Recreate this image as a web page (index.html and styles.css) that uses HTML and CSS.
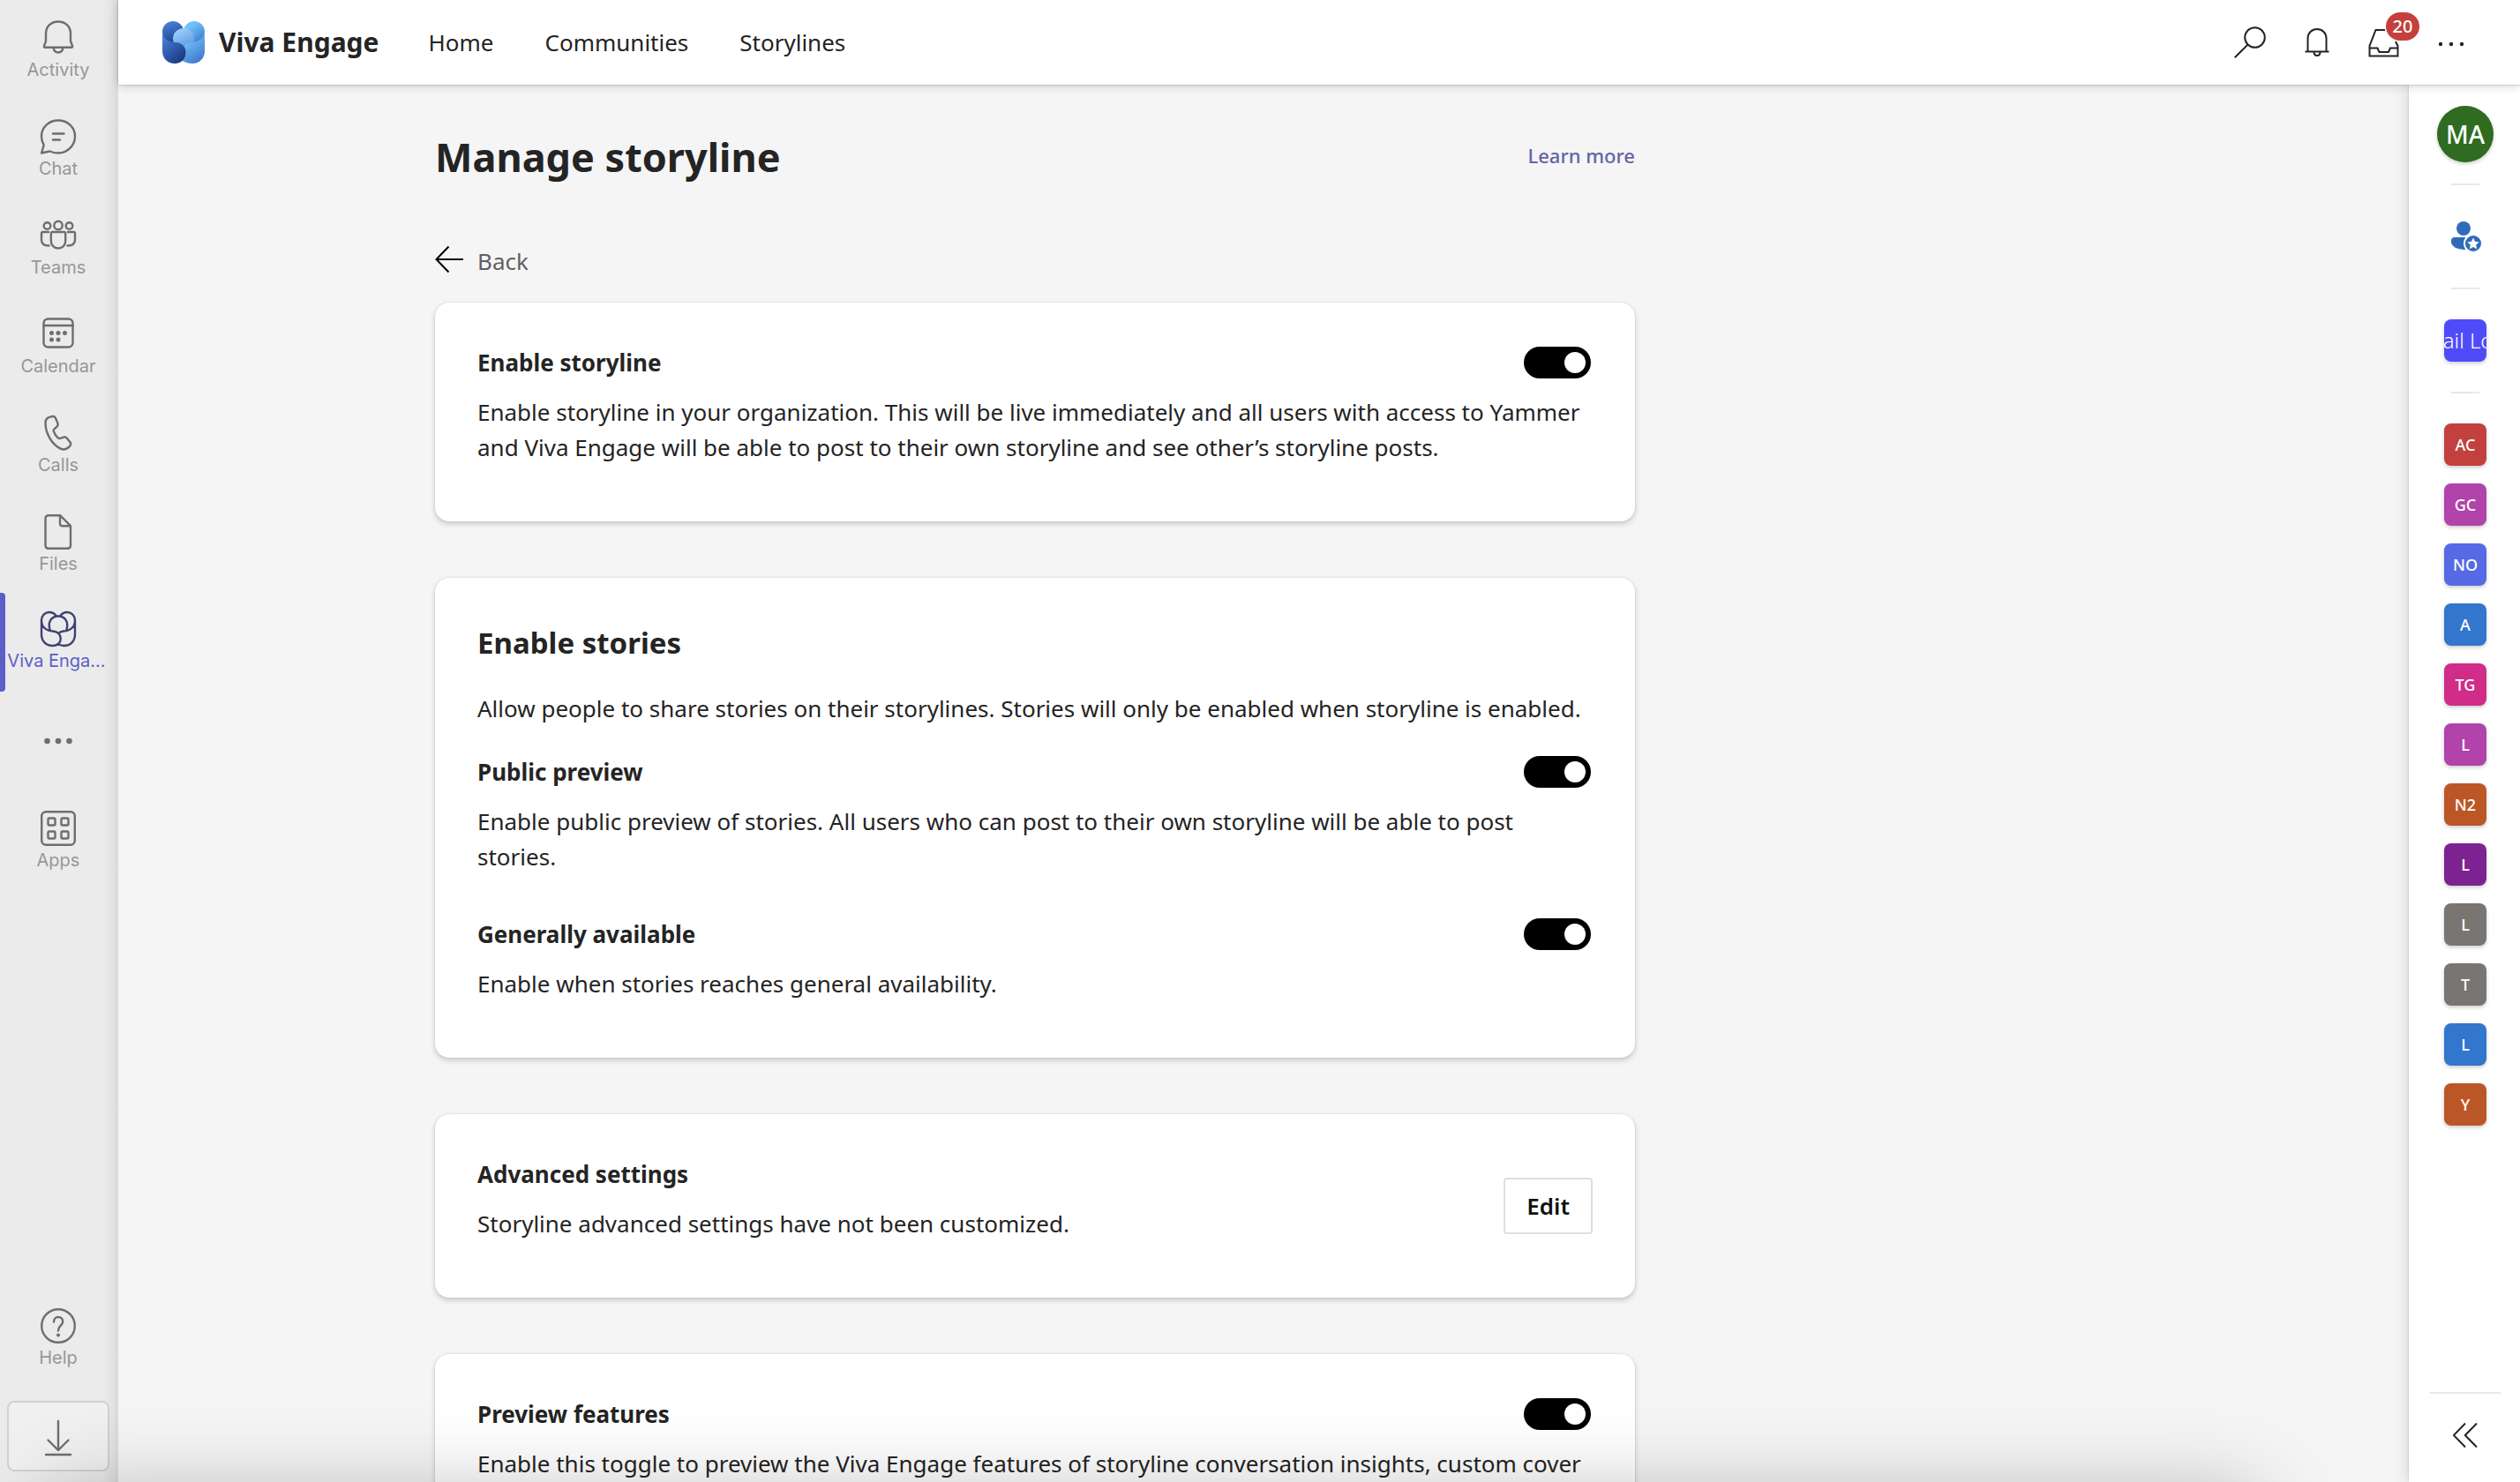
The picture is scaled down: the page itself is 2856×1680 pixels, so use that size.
FILE: index.html
```html
<!DOCTYPE html>
<html lang="en">
<head>
<meta charset="utf-8">
<title>Viva Engage - Manage storyline</title>
<link rel="stylesheet" href="styles.css">
</head>
<body>
<div class="app">
  <nav class="sidebar" aria-label="Apps">
    <a class="app-link" href="#">
      <svg class="app-icon" viewBox="0 0 40 40"><path d="M20 1.500C11.500 1.500 6 7.500 6 15v8.500l-2 5.500c-.4 1.200.1 1.700 1 1.700h30c.9 0 1.400-.5 1-1.700l-2-5.500V15C34 7.500 28.500 1.500 20 1.500zM14.500 31c.5 3.500 2.500 5.500 5.500 5.500s5-2 5.500-5.500"/></svg>
      <span class="app-label">Activity</span>
    </a>
    <a class="app-link" href="#">
      <svg class="app-icon" viewBox="0 0 40 40"><path d="M20 1.500c10.500 0 19 7.500 19 18s-8.500 19-19 19c-3.500 0-7-.8-9.500-2L1 38.500l2.700-9C2 26.500 1 23 1 19.500 1 9 9.500 1.500 20 1.500zM14 16.500h12.500M14 23.500h8"/></svg>
      <span class="app-label">Chat</span>
    </a>
    <a class="app-link" href="#">
      <svg class="app-icon" viewBox="0 0 40 40"><circle cx="20" cy="8.500" r="4.700"/><circle cx="7.500" cy="9" r="3.800"/><circle cx="32.500" cy="9" r="3.800"/><path d="M13.500 16h13c1 0 1.700.7 1.700 1.700V26c0 5-3.500 8.500-8.200 8.500S11.800 31 11.800 26v-8.300c0-1 .7-1.700 1.700-1.700zM9 16H2.500C1.600 16 1 16.600 1 17.500V25c0 4 3 6.500 8.500 6.500M31 16h6.500c.9 0 1.500.6 1.500 1.500V25c0 4-3 6.500-8.500 6.500"/></svg>
      <span class="app-label">Teams</span>
    </a>
    <a class="app-link" href="#">
      <svg class="app-icon" viewBox="0 0 40 40"><rect x="3.500" y="2.500" width="33" height="32" rx="5"/><path d="M3.500 10h33"/><g class="fill"><circle cx="12.500" cy="18.500" r="2.500"/><circle cx="20" cy="18.500" r="2.500"/><circle cx="27.500" cy="18.500" r="2.500"/><circle cx="12.500" cy="26" r="2.500"/><circle cx="20" cy="26" r="2.500"/></g></svg>
      <span class="app-label">Calendar</span>
    </a>
    <a class="app-link" href="#">
      <svg class="app-icon" viewBox="0 0 40 40"><path d="M10 1.800l3.500-.8c1.500-.2 2.700.5 3.400 1.800l2.500 6c.5 1.400.2 2.800-.9 3.900l-3 2.600c-.8.8-1 1.600-.7 2.600 1 3 2.500 5.300 4.800 7.400.8.700 1.700.9 2.800.6l4-1.200c1.400-.4 2.800.1 3.700 1.200l3.500 4.600c.8 1.200.7 2.700-.2 3.800l-1.200 1.300c-2.400 2.600-6 3.600-9.400 2C13 33 5.500 20.500 5.500 8.500 5.500 5.200 7 2.700 10 1.800z"/></svg>
      <span class="app-label">Calls</span>
    </a>
    <a class="app-link" href="#">
      <svg class="app-icon" viewBox="0 0 40 40"><path d="M9 1.200h13l12 12v22c0 2-1.300 3.500-3.500 3.500H9c-2 0-3.500-1.500-3.500-3.500v-30.500C5.500 2.500 7 1.200 9 1.200zM22 1.200v9.300c0 1.700 1 2.700 2.700 2.700H34"/></svg>
      <span class="app-label">Files</span>
    </a>
    <a class="app-link app-link-active" href="#" aria-current="page">
      <svg class="app-icon" viewBox="0 0 40 40"><path d="M17.500 4.800C15.500 2.500 13 1 10 1 5 1 1 5 1 10c0 7.500 5 12 13 12.500 5.500.3 8.800 4 8.800 8.500 0 4.700-4 8-9 8C6 39 1 33.500 1 26V10M22.500 4.800C24.500 2.500 27 1 30 1c5 0 9 4 9 9 0 7.500-5 12-13 12.500-2.500.2-4.500 1-6 2.500M39 10v16c0 7.500-5 13-12.500 13-2.500 0-4.500-.7-6.300-2.200M10.800 21.500C7.500 12 12.500 5.500 20 5.500S32.500 12 29.200 21.500"/></svg>
      <span class="app-label">Viva Enga...</span>
    </a>
    <button class="app-link app-more" type="button" aria-label="More apps">
      <svg class="app-icon" viewBox="0 0 40 40"><g class="fill"><circle cx="7.500" cy="20" r="3.300"/><circle cx="20" cy="20" r="3.300"/><circle cx="32.500" cy="20" r="3.300"/></g></svg>
    </button>
    <a class="app-link" href="#">
      <svg class="app-icon" viewBox="0 0 40 40"><rect x="1.200" y="1.200" width="37.600" height="37.600" rx="5"/><rect x="8.500" y="8.500" width="8" height="8" rx="1.500"/><rect x="23.500" y="8.500" width="8" height="8" rx="1.500"/><rect x="8.500" y="23.500" width="8" height="8" rx="1.500"/><rect x="23.500" y="23.500" width="8" height="8" rx="1.500"/></svg>
      <span class="app-label">Apps</span>
    </a>
    <a class="app-link app-help" href="#">
      <svg class="app-icon" viewBox="0 0 40 40"><circle cx="20" cy="20" r="18.800"/><path d="M15 15.500c0-3.300 2-5.500 5-5.500s5.200 2.200 5.200 5c0 4.500-5.200 5-5.200 10.500"/><circle class="fill" cx="20" cy="30.500" r="2"/></svg>
      <span class="app-label">Help</span>
    </a>
    <button class="download" type="button" aria-label="Download">
      <svg class="app-icon" viewBox="0 0 40 40"><path d="M20 3v33M8.500 24.500L20 36l11.500-11.500M6 41h28"/></svg>
    </button>
  </nav>

  <div class="shell">
    <header class="topbar">
      <a class="brand" href="#">
        <svg class="brand-logo" viewBox="0 0 48 48">
          <defs>
            <linearGradient id="petal-tl" x1="0.300" y1="0" x2="0.600" y2="1"><stop offset="0" stop-color="#4684dc"/><stop offset="1" stop-color="#1f3f8a"/></linearGradient>
            <linearGradient id="petal-tr" x1="0.300" y1="0.300" x2="0.800" y2="1"><stop offset="0" stop-color="#6dc0fc"/><stop offset="1" stop-color="#3f78c8"/></linearGradient>
            <linearGradient id="petal-c" x1="0.200" y1="0" x2="0.700" y2="1"><stop offset="0" stop-color="#a0d4fa"/><stop offset="1" stop-color="#5795dd"/></linearGradient>
            <linearGradient id="petal-bl" x1="0" y1="0" x2="0.700" y2="1"><stop offset="0" stop-color="#4a8cec"/><stop offset="1" stop-color="#1c3a80"/></linearGradient>
            <linearGradient id="petal-br" x1="0.400" y1="0.200" x2="0.800" y2="1"><stop offset="0" stop-color="#6cbffa"/><stop offset="1" stop-color="#3c74c4"/></linearGradient>
          </defs>
          <path fill="url(#petal-tl)" d="M12 0C5.400 0 0 5.400 0 12c0 8 7 13 16 13l8-1V9C22 4 18 0 12 0z"/>
          <path fill="url(#petal-tr)" d="M36 0c6.600 0 12 5.400 12 12 0 8-7 13-16 13l-8-1V9c2-5 6-9 12-9z"/>
          <circle fill="url(#petal-c)" cx="24" cy="20" r="12"/>
          <path fill="url(#petal-br)" d="M48 11c0 8-6 12.500-15 13-5 .3-8 3-8.500 7L23 45c3 2 7 3 11 3 8 0 14-6 14-14z"/>
          <path fill="url(#petal-bl)" d="M0 11c0 8 6 12.500 15 13 7 .4 11.500 5 11.500 11 0 8-5 13-12.500 13C6 48 0 42 0 34z"/>
        </svg>
        <span>Viva Engage</span>
      </a>
      <nav class="topnav" aria-label="Main">
        <a href="#">Home</a>
        <a href="#">Communities</a>
        <a href="#">Storylines</a>
      </nav>
      <div class="tools">
        <button class="tool" type="button" aria-label="Search"><svg viewBox="0 0 36 36"><circle cx="23.500" cy="12.500" r="11.300"/><path d="M15.500 20.500L.8 35.300"/></svg></button>
        <button class="tool" type="button" aria-label="Notifications"><svg viewBox="0 0 36 36"><path d="M7.500 28V13.500C7.500 7.500 12 3 18 3s10.500 4.500 10.500 10.500V28M4.500 28.500h27M14.500 29c0 2.500 1.500 4 3.500 4s3.500-1.500 3.500-4"/></svg></button>
        <button class="tool" type="button" aria-label="Inbox, 20 new"><svg viewBox="0 0 36 36"><path d="M19 4H8.500L1.500 22v11.500h32V22L31 17M1.500 24.500h9l2 4.500h10.500l2-4.500h8.500"/></svg><span class="badge">20</span></button>
        <button class="tool" type="button" aria-label="More options"><svg viewBox="0 0 36 36"><g class="fill"><circle cx="6" cy="20" r="2.200"/><circle cx="18" cy="20" r="2.200"/><circle cx="30" cy="20" r="2.200"/></g></svg></button>
      </div>
    </header>

    <div class="body">
      <main class="content">
        <div class="columns">
          <div class="settings">
            <div class="title-row">
              <h1>Manage storyline</h1>
              <a class="learn-more" href="#">Learn more</a>
            </div>
            <a class="back" href="#">
              <svg viewBox="0 0 32 36"><path d="M15.500 3.500L1.500 18l14 14.500M1.500 18H32"/></svg>
              <span>Back</span>
            </a>

            <section class="card">
              <div class="setting">
                <div class="setting-head">
                  <label for="enable-storyline">Enable storyline</label>
                  <input class="toggle" type="checkbox" role="switch" id="enable-storyline" checked>
                </div>
                <p>Enable storyline in your organization. This will be live immediately and all users with access to Yammer and Viva Engage will be able to post to their own storyline and see other’s storyline posts.</p>
              </div>
            </section>

            <section class="card">
              <h2>Enable stories</h2>
              <p class="intro">Allow people to share stories on their storylines. Stories will only be enabled when storyline is enabled.</p>
              <div class="setting">
                <div class="setting-head">
                  <label for="public-preview">Public preview</label>
                  <input class="toggle" type="checkbox" role="switch" id="public-preview" checked>
                </div>
                <p>Enable public preview of stories. All users who can post to their own storyline will be able to post stories.</p>
              </div>
              <div class="setting">
                <div class="setting-head">
                  <label for="generally-available">Generally available</label>
                  <input class="toggle" type="checkbox" role="switch" id="generally-available" checked>
                </div>
                <p>Enable when stories reaches general availability.</p>
              </div>
            </section>

            <section class="card">
              <div class="advanced">
                <div class="setting">
                  <h3>Advanced settings</h3>
                  <p>Storyline advanced settings have not been customized.</p>
                </div>
                <button class="edit" type="button">Edit</button>
              </div>
            </section>

            <section class="card">
              <div class="setting">
                <div class="setting-head">
                  <label for="preview-features">Preview features</label>
                  <input class="toggle" type="checkbox" role="switch" id="preview-features" checked>
                </div>
                <p>Enable this toggle to preview the Viva Engage features of storyline conversation insights, custom cover</p>
              </div>
            </section>
          </div>
        </div>
      </main>

      <aside class="rail" aria-label="My communities">
        <a class="avatar" href="#">MA</a>
        <hr>
        <a class="person" href="#" aria-label="Leadership">
          <svg viewBox="0 0 48 48"><circle cx="22" cy="15" r="8"/><path d="M12 25h17v14h-5C14 39 8 35 8 30v-1c0-2.500 1.500-4 4-4z"/><circle class="ring" cx="33" cy="32" r="10"/><path class="star" d="M33 25.500l2 4.300 4.700.6-3.500 3.200.9 4.700-4.100-2.400-4.100 2.400.9-4.700-3.500-3.200 4.700-.6z"/></svg>
        </a>
        <hr>
        <a class="tile tile-image" href="#"><span>Email Logo</span></a>
        <hr>
        <div class="tiles">
          <a class="tile red" href="#">AC</a>
          <a class="tile orchid" href="#">GC</a>
          <a class="tile indigo" href="#">NO</a>
          <a class="tile blue" href="#">A</a>
          <a class="tile pink" href="#">TG</a>
          <a class="tile orchid" href="#">L</a>
          <a class="tile orange" href="#">N2</a>
          <a class="tile purple" href="#">L</a>
          <a class="tile gray" href="#">L</a>
          <a class="tile gray" href="#">T</a>
          <a class="tile blue" href="#">L</a>
          <a class="tile orange" href="#">Y</a>
        </div>
        <div class="rail-foot">
          <button class="expand" type="button" aria-label="Expand"><svg viewBox="0 0 28 28"><path d="M14 .5L.8 14 14 27.500M27 .5L13.800 14 27 27.500"/></svg></button>
        </div>
      </aside>
    </div>
  </div>
</div>
<div class="edge-shade"></div>
</body>
</html>
```
FILE: styles.css
```css
* {
  box-sizing: border-box;
}

body {
  margin: 0;
  overflow: hidden;
  background: #f5f5f5;
  color: #242424;
  font-family: "Noto Sans", "Open Sans", sans-serif;
  font-size: 26px;
  line-height: 40px;
}

a {
  color: inherit;
  text-decoration: none;
}

button {
  margin: 0;
  padding: 0;
  border: 0;
  background: none;
  color: inherit;
  font: inherit;
}

svg {
  display: block;
  fill: none;
  stroke: currentColor;
  stroke-width: 2;
}

.fill {
  fill: currentColor;
  stroke: none;
}

.app {
  display: flex;
  height: 100vh;
}

/* App bar */

.sidebar {
  flex: none;
  display: flex;
  flex-direction: column;
  width: 134px;
  background: linear-gradient(to left, #dadada 0, #e2e2e2 6px, #ebebeb 18px);
  font-family: Inter, sans-serif;
  font-size: 20px;
  line-height: 28px;
}

.app-link {
  position: relative;
  display: flex;
  flex: none;
  flex-direction: column;
  align-items: center;
  gap: 2px;
  width: 132px;
  height: 112px;
  padding-top: 23px;
  color: #6e6e6e;
}

.app-icon {
  width: 40px;
  height: 40px;
  overflow: visible;
  stroke-width: 2.4;
  stroke-linejoin: round;
  stroke-linecap: round;
}

.app-label {
  color: #979797;
  white-space: nowrap;
}

.app-link-active {
  padding-top: 21px;
  color: #41426f;
}

.app-link-active .app-label {
  padding-right: 4px;
  color: #5b5fc7;
}

.app-link-active::before {
  content: "";
  position: absolute;
  left: 0;
  top: 0;
  width: 6px;
  height: 100%;
  border-radius: 0 4px 4px 0;
  background: #5b5fc7;
}

.app-more {
  justify-content: center;
  padding-top: 0;
}

.app-help {
  margin-top: auto;
}

.download {
  flex: none;
  display: flex;
  align-items: center;
  justify-content: center;
  width: 116px;
  height: 80px;
  margin: 16px 8px 12px;
  border: 2px solid #d0d0d0;
  border-radius: 8px;
  background: #f0f0f0;
  color: #6e6e6e;
}

/* Header */

.shell {
  flex: 1;
  display: flex;
  flex-direction: column;
  min-width: 0;
}

.topbar {
  position: relative;
  z-index: 2;
  flex: none;
  display: flex;
  align-items: center;
  height: 96px;
  padding: 0 40px 0 50px;
  background: #fff;
  box-shadow: 0 0 2px rgba(0, 0, 0, 0.3), 0 2px 10px rgba(0, 0, 0, 0.16);
}

.brand {
  display: flex;
  align-items: center;
  gap: 16px;
  font-size: 30px;
  font-weight: 700;
}

.brand-logo {
  width: 48px;
  height: 48px;
  stroke: none;
}

.topnav {
  display: flex;
  gap: 58px;
  margin-left: 56px;
}

.tools {
  display: flex;
  margin-left: auto;
}

.tool {
  position: relative;
  display: flex;
  align-items: center;
  justify-content: center;
  width: 76px;
  height: 96px;
}

.tool svg {
  width: 36px;
  height: 36px;
}

.badge {
  position: absolute;
  left: 40px;
  top: 14px;
  width: 38px;
  height: 32px;
  border-radius: 16px;
  background: #c4403d;
  color: #fff;
  font-size: 20px;
  font-weight: 500;
  line-height: 32px;
  text-align: center;
}

/* Settings page */

.body {
  flex: 1;
  display: flex;
  min-height: 0;
}

.content {
  flex: 1;
  min-width: 0;
  overflow: hidden;
}

.columns {
  max-width: 1878px;
  margin: 0 auto;
  padding-top: 50px;
}

.settings {
  display: flex;
  flex-direction: column;
  gap: 64px;
  max-width: 1360px;
}

.title-row {
  display: flex;
  justify-content: space-between;
  padding-bottom: 2px;
}

h1,
h2,
h3,
p {
  margin: 0;
}

h1 {
  font-size: 45px;
  line-height: 64px;
}

.learn-more {
  color: #6264a7;
  font-size: 22px;
  font-weight: 500;
  line-height: 60px;
}

.back {
  display: flex;
  gap: 16px;
  align-self: flex-start;
  margin-bottom: -37px;
  color: #616161;
}

.back svg {
  width: 32px;
  height: 36px;
  color: #000;
}

.card {
  padding: 48px 48px 64px;
  border-radius: 16px;
  background: #fff;
  box-shadow: 0 0 2px rgba(0, 0, 0, 0.14), 0 3px 6px rgba(0, 0, 0, 0.18);
}

h2 {
  font-size: 33px;
  line-height: 52px;
}

.intro {
  margin: 28px 0 32px;
}

.setting {
  display: flex;
  flex-direction: column;
  gap: 16px;
}

.setting + .setting {
  margin-top: 48px;
}

.setting-head {
  display: flex;
  align-items: center;
  justify-content: space-between;
  padding-right: 2px;
}

.setting-head label,
h3 {
  font-size: 26px;
  font-weight: 700;
}

.toggle {
  appearance: none;
  display: flex;
  align-items: center;
  justify-content: flex-start;
  width: 76px;
  height: 36px;
  margin: 0;
  padding: 6px;
  border-radius: 18px;
  background: #777;
}

.toggle:checked {
  justify-content: flex-end;
  background: #000;
}

.toggle::before {
  content: "";
  width: 24px;
  height: 24px;
  border-radius: 50%;
  background: #fff;
}

.advanced {
  display: flex;
  align-items: center;
  justify-content: space-between;
}

.edit {
  height: 64px;
  margin: 8px 0 -8px;
  padding: 0 24px;
  border: 2px solid #dedede;
  border-radius: 4px;
  background: #fff;
  color: #111;
  font-weight: 600;
}

/* Community rail */

.rail {
  position: relative;
  z-index: 1;
  flex: none;
  display: flex;
  flex-direction: column;
  align-items: center;
  width: 126px;
  padding: 24px 0 0 2px;
  background: #fff;
  box-shadow: 0 0 2px rgba(0, 0, 0, 0.2), 0 0 18px rgba(0, 0, 0, 0.16);
}

.avatar,
.tile {
  display: flex;
  flex: none;
  align-items: center;
  justify-content: center;
  color: #fff;
  font-weight: 500;
  box-shadow: 0 2px 4px rgba(0, 0, 0, 0.2);
}

.avatar {
  width: 64px;
  height: 64px;
  margin-bottom: 24px;
  border-radius: 50%;
  background: #2f6b20;
  font-size: 28px;
}

.rail hr {
  width: 32px;
  height: 2px;
  margin: 0;
  border: 0;
  background: #e8e8e8;
}

.person {
  margin: 34px 0;
  color: #2f6bb8;
}

.person svg {
  width: 48px;
  height: 48px;
  fill: currentColor;
  stroke: none;
}

.person .ring {
  stroke: #fff;
}

.person .star {
  fill: #fff;
}

.tile {
  width: 48px;
  height: 48px;
  border-radius: 8px;
  font-size: 18px;
}

.tile-image {
  margin: 34px 0;
  overflow: hidden;
  background: #4f4bf8;
  font-size: 24px;
  font-weight: 300;
  white-space: nowrap;
}

.tiles {
  display: flex;
  flex-direction: column;
  gap: 20px;
  margin-top: 34px;
}

.red { background: #c2413e; }
.orchid { background: #b143ab; }
.indigo { background: #556ae4; }
.blue { background: #3276cd; }
.pink { background: #d02c88; }
.orange { background: #bb5727; }
.purple { background: #7d2391; }
.gray { background: #797573; }

.rail-foot {
  display: flex;
  justify-content: center;
  width: 80px;
  height: 102px;
  margin-top: auto;
  padding-top: 33px;
  border-top: 2px solid #e8e8e8;
}

.expand {
  width: 28px;
  height: 28px;
}

/* Soft shade along the lower window edge */

.edge-shade {
  position: fixed;
  z-index: 3;
  left: 60px;
  right: 300px;
  top: calc(100% + 20px);
  height: 200px;
  box-shadow: 0 0 100px rgba(0, 0, 0, 0.3);
  pointer-events: none;
}
```
